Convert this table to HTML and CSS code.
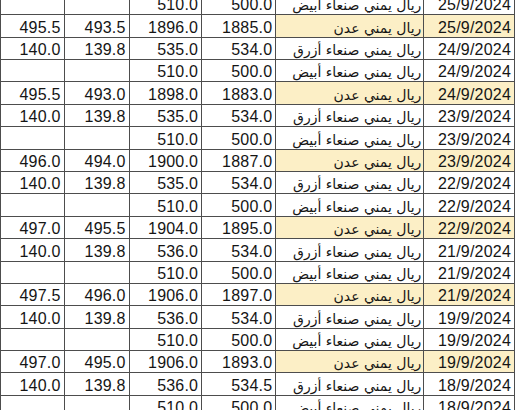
FILE: index.html
```html
<!DOCTYPE html>
<html lang="ar">
<head>
<meta charset="utf-8">
<link rel="stylesheet" href="styles.css">
</head>
<body>
<table class="sheet">
<colgroup>
<col class="c1"><col class="c2"><col class="c3"><col class="c4"><col class="c5"><col class="c6">
</colgroup>
<tbody>
<tr><td class="num"></td><td class="num"></td><td class="num">510.0</td><td class="num">500.0</td><td class="name" dir="rtl">ريال يمني صنعاء أبيض</td><td class="date">25/9/2024</td></tr>
<tr class="aden"><td class="num">495.5</td><td class="num">493.5</td><td class="num">1896.0</td><td class="num">1885.0</td><td class="name" dir="rtl">ريال يمني عدن</td><td class="date">25/9/2024</td></tr>
<tr><td class="num">140.0</td><td class="num">139.8</td><td class="num">535.0</td><td class="num">534.0</td><td class="name" dir="rtl">ريال يمني صنعاء أزرق</td><td class="date">24/9/2024</td></tr>
<tr><td class="num"></td><td class="num"></td><td class="num">510.0</td><td class="num">500.0</td><td class="name" dir="rtl">ريال يمني صنعاء أبيض</td><td class="date">24/9/2024</td></tr>
<tr class="aden"><td class="num">495.5</td><td class="num">493.0</td><td class="num">1898.0</td><td class="num">1883.0</td><td class="name" dir="rtl">ريال يمني عدن</td><td class="date">24/9/2024</td></tr>
<tr><td class="num">140.0</td><td class="num">139.8</td><td class="num">535.0</td><td class="num">534.0</td><td class="name" dir="rtl">ريال يمني صنعاء أزرق</td><td class="date">23/9/2024</td></tr>
<tr><td class="num"></td><td class="num"></td><td class="num">510.0</td><td class="num">500.0</td><td class="name" dir="rtl">ريال يمني صنعاء أبيض</td><td class="date">23/9/2024</td></tr>
<tr class="aden"><td class="num">496.0</td><td class="num">494.0</td><td class="num">1900.0</td><td class="num">1887.0</td><td class="name" dir="rtl">ريال يمني عدن</td><td class="date">23/9/2024</td></tr>
<tr><td class="num">140.0</td><td class="num">139.8</td><td class="num">535.0</td><td class="num">534.0</td><td class="name" dir="rtl">ريال يمني صنعاء أزرق</td><td class="date">22/9/2024</td></tr>
<tr><td class="num"></td><td class="num"></td><td class="num">510.0</td><td class="num">500.0</td><td class="name" dir="rtl">ريال يمني صنعاء أبيض</td><td class="date">22/9/2024</td></tr>
<tr class="aden"><td class="num">497.0</td><td class="num">495.5</td><td class="num">1904.0</td><td class="num">1895.0</td><td class="name" dir="rtl">ريال يمني عدن</td><td class="date">22/9/2024</td></tr>
<tr><td class="num">140.0</td><td class="num">139.8</td><td class="num">536.0</td><td class="num">534.0</td><td class="name" dir="rtl">ريال يمني صنعاء أزرق</td><td class="date">21/9/2024</td></tr>
<tr><td class="num"></td><td class="num"></td><td class="num">510.0</td><td class="num">500.0</td><td class="name" dir="rtl">ريال يمني صنعاء أبيض</td><td class="date">21/9/2024</td></tr>
<tr class="aden"><td class="num">497.5</td><td class="num">496.0</td><td class="num">1906.0</td><td class="num">1897.0</td><td class="name" dir="rtl">ريال يمني عدن</td><td class="date">21/9/2024</td></tr>
<tr><td class="num">140.0</td><td class="num">139.8</td><td class="num">536.0</td><td class="num">534.0</td><td class="name" dir="rtl">ريال يمني صنعاء أزرق</td><td class="date">19/9/2024</td></tr>
<tr><td class="num"></td><td class="num"></td><td class="num">510.0</td><td class="num">500.0</td><td class="name" dir="rtl">ريال يمني صنعاء أبيض</td><td class="date">19/9/2024</td></tr>
<tr class="aden"><td class="num">497.0</td><td class="num">495.0</td><td class="num">1906.0</td><td class="num">1893.0</td><td class="name" dir="rtl">ريال يمني عدن</td><td class="date">19/9/2024</td></tr>
<tr><td class="num">140.0</td><td class="num">139.8</td><td class="num">536.0</td><td class="num">534.5</td><td class="name" dir="rtl">ريال يمني صنعاء أزرق</td><td class="date">18/9/2024</td></tr>
<tr><td class="num"></td><td class="num"></td><td class="num">510.0</td><td class="num">500.0</td><td class="name" dir="rtl">ريال يمني صنعاء أبيض</td><td class="date">18/9/2024</td></tr>
</tbody>
</table>
</body>
</html>
```
FILE: styles.css
```css
html, body {
  margin: 0;
  padding: 0;
  background: #ffffff;
  overflow: hidden;
}

.sheet {
  border-collapse: separate;
  border-spacing: 0;
  table-layout: fixed;
  width: 515px;
  margin-top: -8.2px;
  border-left: 1.5px solid #4d4d4d;
  border-top: 1.5px solid #4d4d4d;
  font-family: "Liberation Sans", Arial, sans-serif;
  font-size: 16px;
  letter-spacing: 0.2px;
  color: #151515;
}

.c1 { width: 63.5px; }
.c2 { width: 65px; }
.c3 { width: 72.5px; }
.c4 { width: 74px; }
.c5 { width: 148px; }
.c6 { width: 90.5px; }

.sheet td {
  height: 22.4px;
  box-sizing: border-box;
  border-right: 1.5px solid #4d4d4d;
  border-bottom: 1.5px solid #4d4d4d;
  padding: 0 3px 0 0;
  vertical-align: bottom;
  line-height: 18px;
  white-space: nowrap;
}

.num {
  text-align: right;
}

.name {
  text-align: right;
  font-family: "DejaVu Sans", sans-serif;
  font-size: 14px;
  letter-spacing: 0;
}

.date {
  text-align: right;
  padding-right: 8px;
}

.aden .name,
.aden .date {
  background: #fcefc6;
}
```
